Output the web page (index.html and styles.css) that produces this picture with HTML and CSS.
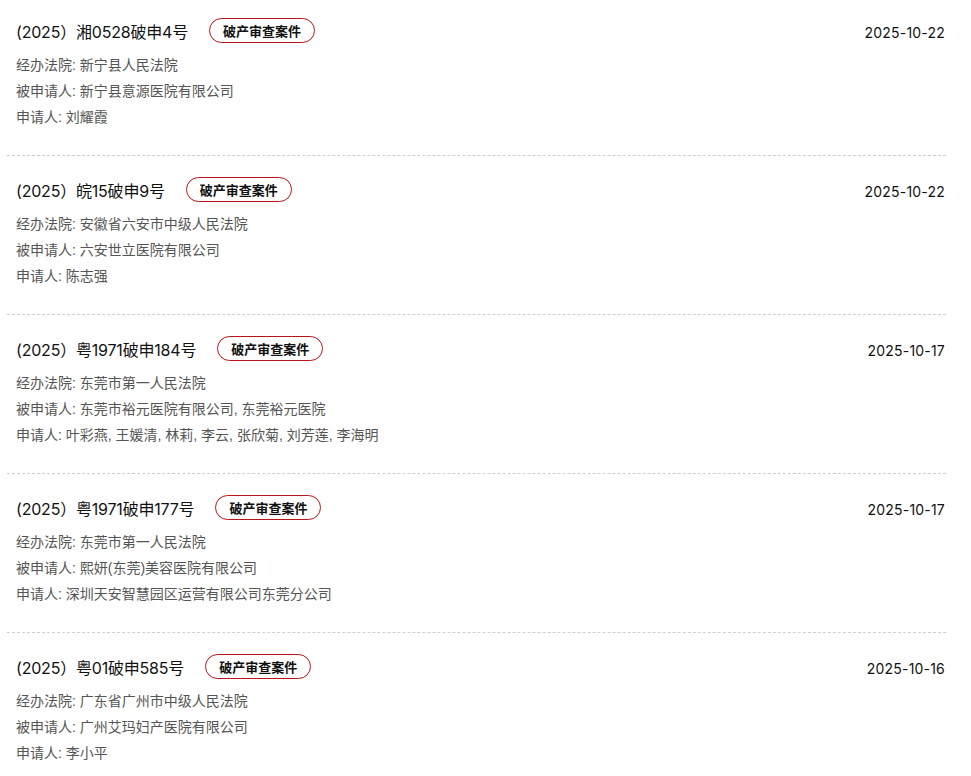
FILE: index.html
```html
<!DOCTYPE html>
<html lang="zh-CN">
<head>
<meta charset="utf-8">
<link rel="stylesheet" href="styles.css">
</head>
<body>
<div class="list">
  <div class="item">
    <div class="head">
      <div class="title-wrap"><span class="title">(2025）湘0528破申4号</span><span class="badge">破产审查案件</span></div>
      <span class="date">2025-10-22</span>
    </div>
    <div class="line">经办法院: 新宁县人民法院</div>
    <div class="line">被申请人: 新宁县意源医院有限公司</div>
    <div class="line">申请人: 刘耀霞</div>
  </div>
  <div class="item">
    <div class="head">
      <div class="title-wrap"><span class="title">(2025）皖15破申9号</span><span class="badge">破产审查案件</span></div>
      <span class="date">2025-10-22</span>
    </div>
    <div class="line">经办法院: 安徽省六安市中级人民法院</div>
    <div class="line">被申请人: 六安世立医院有限公司</div>
    <div class="line">申请人: 陈志强</div>
  </div>
  <div class="item">
    <div class="head">
      <div class="title-wrap"><span class="title">(2025）粤1971破申184号</span><span class="badge">破产审查案件</span></div>
      <span class="date">2025-10-17</span>
    </div>
    <div class="line">经办法院: 东莞市第一人民法院</div>
    <div class="line">被申请人: 东莞市裕元医院有限公司, 东莞裕元医院</div>
    <div class="line">申请人: 叶彩燕, 王媛清, 林莉, 李云, 张欣菊, 刘芳莲, 李海明</div>
  </div>
  <div class="item">
    <div class="head">
      <div class="title-wrap"><span class="title">(2025）粤1971破申177号</span><span class="badge">破产审查案件</span></div>
      <span class="date">2025-10-17</span>
    </div>
    <div class="line">经办法院: 东莞市第一人民法院</div>
    <div class="line">被申请人: 熙妍(东莞)美容医院有限公司</div>
    <div class="line">申请人: 深圳天安智慧园区运营有限公司东莞分公司</div>
  </div>
  <div class="item">
    <div class="head">
      <div class="title-wrap"><span class="title">(2025）粤01破申585号</span><span class="badge">破产审查案件</span></div>
      <span class="date">2025-10-16</span>
    </div>
    <div class="line">经办法院: 广东省广州市中级人民法院</div>
    <div class="line">被申请人: 广州艾玛妇产医院有限公司</div>
    <div class="line">申请人: 李小平</div>
  </div>
</div>
</body>
</html>
```

FILE: styles.css
```css
html, body {
  margin: 0;
  padding: 0;
  background: #fff;
}
body {
  font-family: "Liberation Sans", "Noto Sans CJK SC", sans-serif;
  color: #111;
}
.list {
  margin-left: 7px;
  width: 939px;
}
.item {
  padding: 23px 0 25px 9px;
  border-bottom: 1px dashed #cfcfcf;
}
.item:first-child {
  padding-top: 20px;
}
.head {
  display: flex;
  align-items: center;
  justify-content: space-between;
  height: 24px;
  margin-bottom: 8px;
}
.title-wrap {
  display: flex;
  align-items: center;
  gap: 21px;
}
.title {
  font-family: "Inter", "Noto Sans CJK SC", sans-serif;
  font-size: 16px;
  line-height: 24px;
  letter-spacing: -0.2px;
  color: #111;
}
.badge {
  display: inline-flex;
  align-items: center;
  justify-content: center;
  box-sizing: border-box;
  height: 25px;
  padding: 0 13px;
  margin-top: -3px;
  border: 1px solid #b8141c;
  border-radius: 13px;
  font-size: 13px;
  font-weight: bold;
  color: #111;
}
.date {
  font-family: "Inter", "Noto Sans CJK SC", sans-serif;
  font-size: 14px;
  letter-spacing: 0.2px;
  color: #111;
  padding-right: 1px;
}
.line {
  font-size: 14px;
  line-height: 26px;
  color: #555;
}
```
